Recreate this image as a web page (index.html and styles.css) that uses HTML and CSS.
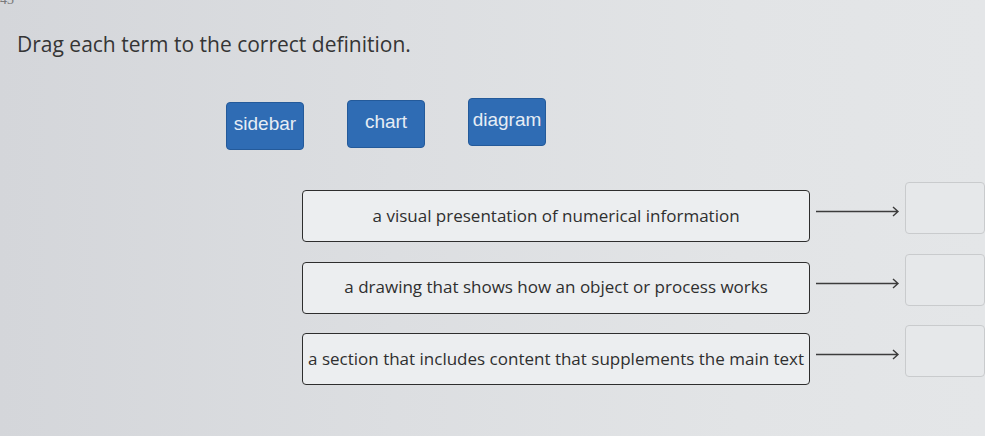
FILE: index.html
```html
<!DOCTYPE html>
<html lang="en">
<head>
<meta charset="utf-8">
<title>Drag each term</title>
<link rel="stylesheet" href="styles.css">
</head>
<body>
<div class="page">
  <div class="qnum">43</div>
  <h1 class="prompt">Drag each term to the correct definition.</h1>
  <div class="terms">
    <div class="term t1">sidebar</div>
    <div class="term t2">chart</div>
    <div class="term t3">diagram</div>
  </div>
  <div class="rows">
    <div class="row">
      <div class="def">a visual presentation of numerical information</div>
      <div class="arrow"><svg width="84" height="12" viewBox="0 0 84 12"><path d="M0 6.5H82M77 2l5 4.5-5 4.5" fill="none" stroke="#3c3c3c" stroke-width="1.4"/></svg></div>
      <div class="target"></div>
    </div>
    <div class="row">
      <div class="def">a drawing that shows how an object or process works</div>
      <div class="arrow"><svg width="84" height="12" viewBox="0 0 84 12"><path d="M0 6.5H82M77 2l5 4.5-5 4.5" fill="none" stroke="#3c3c3c" stroke-width="1.4"/></svg></div>
      <div class="target"></div>
    </div>
    <div class="row">
      <div class="def">a section that includes content that supplements the main text</div>
      <div class="arrow"><svg width="84" height="12" viewBox="0 0 84 12"><path d="M0 6.5H82M77 2l5 4.5-5 4.5" fill="none" stroke="#3c3c3c" stroke-width="1.4"/></svg></div>
      <div class="target"></div>
    </div>
  </div>
</div>
</body>
</html>
```
FILE: styles.css
```css
html, body {
  margin: 0;
  padding: 0;
  height: 100%;
  overflow: hidden;
}
body {
  background: linear-gradient(90deg, #d4d6da 0%, #dcdee1 40%, #e2e4e6 75%, #e4e6e8 100%);
  font-family: "Open Sans", "Liberation Sans", sans-serif;
  color: #333;
}
.page {
  padding: 0 0 0 17px;
}
.qnum {
  font-family: "Liberation Serif", serif;
  font-size: 14px;
  line-height: 14px;
  color: #7a7a7a;
  margin: -7px 0 0 -17px;
  height: 13px;
}
.prompt {
  margin: 24px 0 0 0;
  font-size: 21px;
  font-weight: 400;
  line-height: 28px;
  color: #353535;
}
.terms {
  display: flex;
  gap: 43px;
  margin: 40px 0 0 209px;
  align-items: flex-start;
}
.term {
  width: 78px;
  height: 48px;
  box-sizing: border-box;
  background: #2f6cb4;
  border: 1px solid #245a9a;
  border-radius: 4px;
  color: #e6edf5;
  font-family: "Liberation Sans", Arial, sans-serif;
  font-size: 19px;
  display: flex;
  align-items: center;
  justify-content: center;
  padding-bottom: 4px;
}
.t1 { margin-top: 4px; }
.t2 { margin-top: 2px; }
.t3 { margin-top: 0; }
.rows {
  display: flex;
  flex-direction: column;
  gap: 19.5px;
  margin: 40px 0 0 285px;
}
.row {
  display: flex;
  align-items: flex-start;
}
.def {
  width: 509px;
  height: 52px;
  box-sizing: border-box;
  border: 1.5px solid #2e2e2e;
  border-radius: 4px;
  background: #eceef0;
  display: flex;
  align-items: center;
  justify-content: center;
  font-size: 17px;
  color: #2f2f2f;
  padding-bottom: 2px;
  white-space: nowrap;
}
.arrow {
  margin: 15px 0 0 6px;
  height: 12px;
  display: flex;
}
.target {
  margin: -8px 0 0 5px;
  width: 80px;
  height: 52px;
  box-sizing: border-box;
  border: 1px solid #c9cbcd;
  border-radius: 4px;
  background: #e6e8ea;
}
```
